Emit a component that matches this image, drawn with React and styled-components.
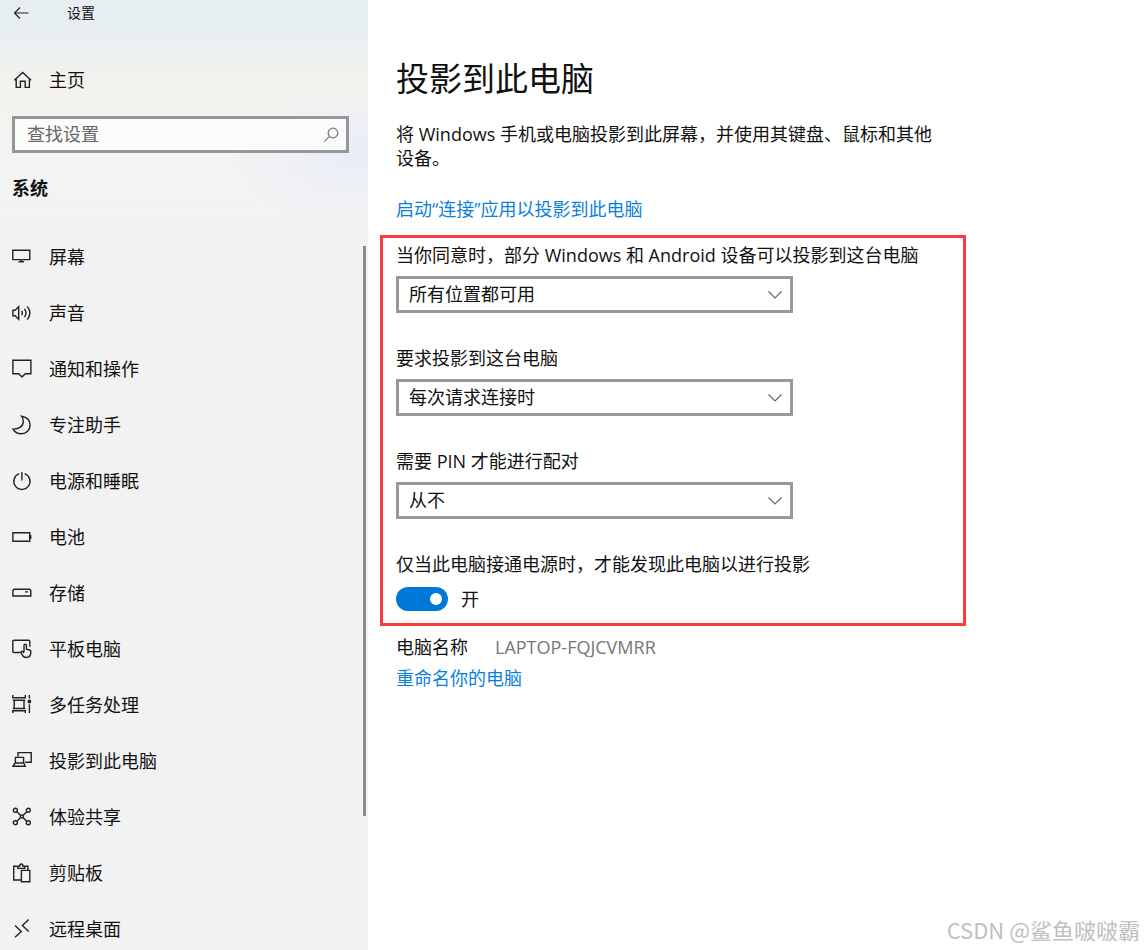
import React, { useState } from 'react'
import styled, { createGlobalStyle } from 'styled-components'

const GlobalStyle = createGlobalStyle`
  * {
    box-sizing: border-box;
  }
  body {
    margin: 0;
    background: #fff;
    color: #111;
    font-family: "Open Sans", "Noto Sans CJK SC", sans-serif;
    font-size: 18px;
    line-height: 24px;
  }
  button, input, select {
    font: inherit;
    color: inherit;
  }
`

const Page = styled.div`
  display: flex;
  height: 100vh;
  overflow: hidden;
`

const Sidebar = styled.aside`
  display: flex;
  flex-direction: column;
  flex: 0 0 368px;
  background:
    radial-gradient(ellipse 130px 70px at 98% 154px, #e9edf8, rgba(233, 237, 248, 0)),
    linear-gradient(#e6eef2 0, #e9eff1 36px, #f3f2ee 84px, #f3f3f0 120px, #f3f3f4 190px, #f2f2f2 240px);
`

const TitleBar = styled.header`
  display: flex;
  align-items: center;
  gap: 37px;
  height: 26px;
  padding-left: 12px;
  font-size: 14px;
`

const BackButton = styled.button`
  display: flex;
  padding: 0;
  border: none;
  background: none;
  cursor: pointer;
`

const NavLink = styled.a`
  display: flex;
  align-items: center;
  gap: 17px;
  height: 56px;
  padding-left: 12px;
  color: inherit;
  text-decoration: none;
  &:hover {
    background: rgba(0, 0, 0, 0.06);
  }
`

const HomeLink = styled(NavLink)`
  margin-top: 26px;
`

const SearchBox = styled.label`
  display: flex;
  align-items: center;
  height: 37px;
  margin: 8px 19px 0 12px;
  padding: 0 7px 0 12px;
  border: 3px solid #969798;
  background: rgba(255, 255, 255, 0.7);
`

const SearchInput = styled.input`
  flex: 1;
  min-width: 0;
  padding: 0 0 2px;
  border: none;
  outline: none;
  background: none;
  &::placeholder {
    color: #666;
    opacity: 1;
  }
`

const Category = styled.h2`
  margin: 23px 12px 0;
  font-size: 18px;
  line-height: 24px;
  font-weight: 700;
`

const NavArea = styled.div`
  display: flex;
  flex: 1;
  min-height: 0;
  margin-top: 29px;
  overflow: hidden;
`

const NavList = styled.ul`
  flex: 1;
  margin: 0;
  padding: 0;
  list-style: none;
`

const ScrollThumb = styled.div`
  width: 3px;
  height: 79%;
  margin: 17px 2px 0 0;
  background: #8a8a8a;
`

const Svg = styled.svg`
  flex: none;
  fill: none;
  stroke: ${props => props.$color || '#222'};
  stroke-width: ${props => props.$weight || 1.4};
`

const Main = styled.main`
  flex: 1;
  min-width: 0;
  padding: 57px 28px 0;
`

const Title = styled.h1`
  margin: 0;
  font-size: 33px;
  line-height: 44px;
  font-weight: 400;
`

const Description = styled.p`
  max-width: 540px;
  margin: 21px 0 27px;
`

const Link = styled.a`
  color: #0a7fdb;
  text-decoration: none;
  &:hover {
    color: #666;
  }
`

const Highlight = styled.section`
  display: flex;
  flex-direction: column;
  gap: 33px;
  max-width: 586px;
  margin: 14px 0 9px -16px;
  padding: 5px 13px 12px;
  border: 3px solid #fb3b3b;
`

const Field = styled.div`
  display: flex;
  flex-direction: column;
  gap: ${props => props.$gap || 9}px;
`

const SelectBox = styled.div`
  position: relative;
  max-width: 397px;
`

const Select = styled.select`
  display: block;
  width: 100%;
  height: 37px;
  padding: 0 40px 2px 10px;
  border: 3px solid #999;
  border-radius: 0;
  appearance: none;
  background: #fff;
`

const Chevron = styled(Svg)`
  position: absolute;
  top: 14px;
  right: 10px;
  pointer-events: none;
`

const ToggleRow = styled.div`
  display: flex;
  align-items: center;
  gap: 13px;
`

const Toggle = styled.input`
  display: flex;
  align-items: center;
  justify-content: flex-end;
  width: 52px;
  height: 24px;
  margin: 0;
  padding: 0 6px;
  border-radius: 12px;
  appearance: none;
  background: #0078d7;
  &::before {
    content: '';
    width: 12px;
    height: 12px;
    border-radius: 50%;
    background: #fff;
  }
  &:not(:checked) {
    justify-content: flex-start;
    background: #999;
  }
`

const NameRow = styled.div`
  display: flex;
  gap: 27px;
  margin-bottom: 7px;
`

const DeviceName = styled.span`
  color: #777;
`

const Watermark = styled.div`
  position: absolute;
  right: 4px;
  bottom: 7px;
  font-family: "Noto Sans CJK SC", sans-serif;
  font-size: 22px;
  line-height: 28px;
  color: #c0c0c0;
  text-shadow: 1px 1px 0 #fff;
`

const Icon = ({ children }) => (
  <Svg width="20" height="20" viewBox="0 0 20 20" aria-hidden="true">{children}</Svg>
)

const menu = [
  { text: '屏幕', icon: <path d="M.8 3.2h17v9.4H.8zM9.3 12.6v2M6.5 14.7h5.6" /> },
  {
    text: '声音',
    icon: <path d="M.9 7.2h2.3L6.7 3.6v12.8l-3.5-3.6H.9zM9.6 8q1.5 2 0 4.2M12.4 5.8q3.2 4.2 0 8.4M15.2 3.4q5.4 6.6 0 13.2" />,
  },
  { text: '通知和操作', icon: <path d="M.9 1.3h18v13.4h-5.6L10 18l-3.3-3.3H.9z" /> },
  {
    text: '专注助手',
    icon: <path d="M9.6 1.2c5.2.9 8.5 4.4 8.5 8.9 0 4.9-3.8 8.6-8.6 8.6-3.5 0-6.9-1.7-8.5-4.6 6 .3 10.3-2.8 10.3-7.9 0-1.9-.6-3.5-1.7-5z" />,
  },
  { text: '电源和睡眠', icon: <path d="M9.9 1v8.5M7.2 2.7a8.1 8.1 0 1 0 5.4 0" /> },
  { text: '电池', icon: <path d="M.9 5.8h16.8v8.4H.9zM18.7 8v4" /> },
  { text: '存储', icon: <path d="M2 6.3h15.8l1 1.5v5.2H.9V7.8zM13 8.9h3" /> },
  {
    text: '平板电脑',
    icon: (
      <path d="M8.3 13.5H2A1.2 1.2 0 0 1 .8 12.3V2.5A1.2 1.2 0 0 1 2 1.3h14.6a1.2 1.2 0 0 1 1.2 1.2v5.3M12 13V6.3a1.2 1.2 0 0 1 2.4 0v4l3.2.7q1.4.4 1.3 2-.2 5.5-4.5 5.5-2.6 0-3.9-2l-1.5-3q.2-1.8 1.7-1l1.3 1.4" />
    ),
  },
  {
    text: '多任务处理',
    icon: (
      <>
        <path d="M.8 0v2.7h12.5V0M2.2 5.2v8.3M12 5.2v8.3M.8 5.2h12.5M.8 13.5h12.5M.8 18v-2.2h12.5V18M17.4 0v3.5M17.4 9.2V18" />
        <circle cx="17.4" cy="6.5" r="1.2" fill="#222" />
      </>
    ),
  },
  {
    text: '投影到此电脑',
    icon: <path d="M6 5.5V1.6h13.2v9.7h-6M3.4 12V6.4h8.2V12M3.2 12h8.6l1.4 3.3H.9z" />,
  },
  {
    text: '体验共享',
    icon: (
      <>
        <circle cx="3.3" cy="3.3" r="2" />
        <circle cx="16.3" cy="3.3" r="2" />
        <circle cx="3.3" cy="15.7" r="2" />
        <circle cx="16.3" cy="15.7" r="2" />
        <circle cx="9.8" cy="9.5" r="1.5" />
        <path d="M4.8 4.7l3.9 3.8M14.8 4.7l-3.9 3.8M4.8 14.3l3.9-3.8M14.8 14.3l-3.9-3.8" />
      </>
    ),
  },
  {
    text: '剪贴板',
    icon: <path d="M8.8 17H1.7V3.3h4.2M12.7 3.3h3.2v3.5M5.9 5.4V3.2h1.7q0-2.2 1.7-2.2t1.7 2.2h1.7v2.2zM9.4 7.4h8.4v11.4H9.4z" />,
  },
  { text: '远程桌面', icon: <path d="M3 6.5l6.3 5.9L3 18.3M16.7.6l-6.3 6 6.3 5.9" /> },
]

const fields = [
  {
    id: 'availability',
    label: '当你同意时，部分 Windows 和 Android 设备可以投影到这台电脑',
    options: ['所有位置都可用', '在安全网络上的任何位置都可用', '始终关闭'],
  },
  { id: 'ask', label: '要求投影到这台电脑', options: ['每次请求连接时', '仅第一次'] },
  { id: 'pin', label: '需要 PIN 才能进行配对', options: ['从不', '第一次', '始终'] },
]

function App() {
  const [plugged, setPlugged] = useState(true)

  return (
    <Page>
      <GlobalStyle />
      <Sidebar>
        <TitleBar>
          <BackButton aria-label="返回">
            <Svg width="18" height="18" viewBox="0 0 18 18" $weight="1.2">
              <path d="M2.5 9h14M8 3.5L2.5 9 8 14.5" />
            </Svg>
          </BackButton>
          <span>设置</span>
        </TitleBar>
        <HomeLink href="#home">
          <Icon>
            <path d="M2.3 10.3l8.4-7.9 8.4 7.9M4.2 8.7v8.7h4.2v-6.2h4.8v6.2h4.2V8.7" />
          </Icon>
          <span>主页</span>
        </HomeLink>
        <SearchBox>
          <SearchInput type="text" placeholder="查找设置" aria-label="查找设置" />
          <Svg width="16" height="16" viewBox="0 0 16 16" $color="#777" $weight="1.2">
            <circle cx="10" cy="6" r="4.8" />
            <path d="M6.6 9.4L1.3 14.7" />
          </Svg>
        </SearchBox>
        <Category>系统</Category>
        <NavArea>
          <NavList>
            {menu.map(item => (
              <li key={item.text}>
                <NavLink href={'#' + item.text}>
                  <Icon>{item.icon}</Icon>
                  <span>{item.text}</span>
                </NavLink>
              </li>
            ))}
          </NavList>
          <ScrollThumb />
        </NavArea>
      </Sidebar>

      <Main>
        <Title>投影到此电脑</Title>
        <Description>
          将 Windows 手机或电脑投影到此屏幕，并使用其键盘、鼠标和其他设备。
        </Description>
        <Link href="#connect">启动“连接”应用以投影到此电脑</Link>
        <Highlight>
          {fields.map(field => (
            <Field key={field.id}>
              <label htmlFor={field.id}>{field.label}</label>
              <SelectBox>
                <Select id={field.id}>
                  {field.options.map(option => <option key={option}>{option}</option>)}
                </Select>
                <Chevron width="16" height="10" viewBox="0 0 16 10" $color="#666" $weight="1.2">
                  <path d="M1.5 1.5L8 8l6.5-6.5" />
                </Chevron>
              </SelectBox>
            </Field>
          ))}
          <Field $gap={11}>
            <label htmlFor="plugged">仅当此电脑接通电源时，才能发现此电脑以进行投影</label>
            <ToggleRow>
              <Toggle
                id="plugged"
                type="checkbox"
                role="switch"
                checked={plugged}
                onChange={e => setPlugged(e.target.checked)}
              />
              <span>{plugged ? '开' : '关'}</span>
            </ToggleRow>
          </Field>
        </Highlight>
        <NameRow>
          <span>电脑名称</span>
          <DeviceName>LAPTOP-FQJCVMRR</DeviceName>
        </NameRow>
        <Link href="#rename">重命名你的电脑</Link>
      </Main>
      <Watermark>CSDN @鲨鱼啵啵霸</Watermark>
    </Page>
  )
}

export default App
